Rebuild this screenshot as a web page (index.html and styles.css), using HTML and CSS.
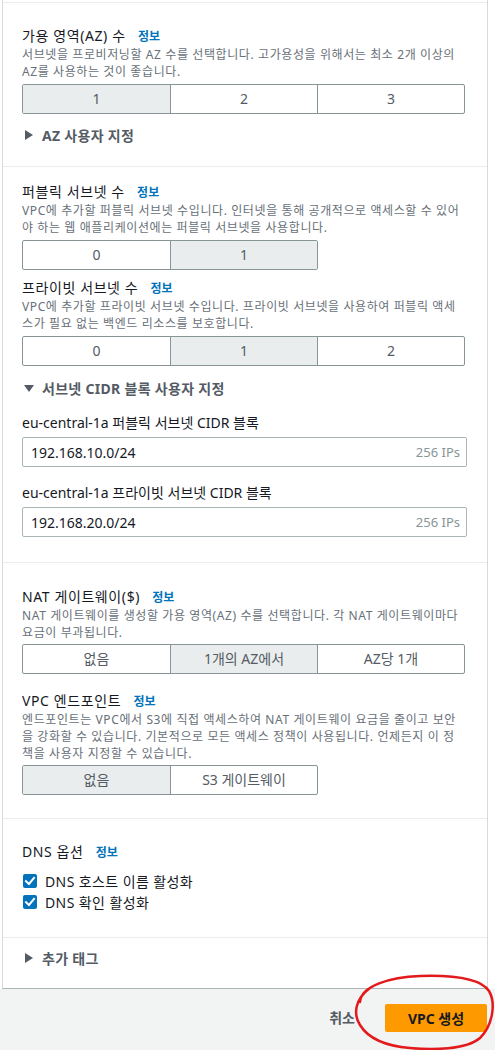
FILE: index.html
```html
<!DOCTYPE html>
<html lang="ko">
<head>
<meta charset="utf-8">
<title>VPC 생성</title>
<link rel="stylesheet" href="styles.css">
</head>
<body>
<div class="card">
  <section class="sec sec-az">
    <div class="label">가용 영역(AZ) 수 <a class="info">정보</a></div>
    <p class="desc">서브넷을 프로비저닝할 AZ 수를 선택합니다. 고가용성을 위해서는 최소 2개 이상의<br>AZ를 사용하는 것이 좋습니다.</p>
    <div class="seg">
      <span class="opt on">1</span><span class="opt">2</span><span class="opt">3</span>
    </div>
    <div class="expander exp-az"><svg class="caret" viewBox="0 0 10 10"><path d="M1 0 L9 5 L1 10 Z"/></svg>AZ 사용자 지정</div>
  </section>

  <section class="sec sec-subnet">
    <div class="label">퍼블릭 서브넷 수 <a class="info">정보</a></div>
    <p class="desc">VPC에 추가할 퍼블릭 서브넷 수입니다. 인터넷을 통해 공개적으로 액세스할 수 있어<br>야 하는 웹 애플리케이션에는 퍼블릭 서브넷을 사용합니다.</p>
    <div class="seg seg-2">
      <span class="opt">0</span><span class="opt on">1</span>
    </div>
    <div class="label label-next">프라이빗 서브넷 수 <a class="info">정보</a></div>
    <p class="desc">VPC에 추가할 프라이빗 서브넷 수입니다. 프라이빗 서브넷을 사용하여 퍼블릭 액세<br>스가 필요 없는 백엔드 리소스를 보호합니다.</p>
    <div class="seg">
      <span class="opt">0</span><span class="opt on">1</span><span class="opt">2</span>
    </div>
    <div class="expander exp-cidr"><svg class="caret" viewBox="0 0 10 10"><path d="M0 2 L10 2 L5 9 Z"/></svg>서브넷 CIDR 블록 사용자 지정</div>

    <div class="field-label fl-1">eu-central-1a 퍼블릭 서브넷 CIDR 블록</div>
    <div class="input"><span class="val">192.168.10.0/24</span><span class="hint">256 IPs</span></div>
    <div class="field-label fl-2">eu-central-1a 프라이빗 서브넷 CIDR 블록</div>
    <div class="input"><span class="val">192.168.20.0/24</span><span class="hint">256 IPs</span></div>
  </section>

  <section class="sec sec-nat">
    <div class="label">NAT 게이트웨이($) <a class="info">정보</a></div>
    <p class="desc">NAT 게이트웨이를 생성할 가용 영역(AZ) 수를 선택합니다. 각 NAT 게이트웨이마다<br>요금이 부과됩니다.</p>
    <div class="seg seg-nat">
      <span class="opt">없음</span><span class="opt on">1개의 AZ에서</span><span class="opt">AZ당 1개</span>
    </div>
    <div class="label label-ep">VPC 엔드포인트 <a class="info">정보</a></div>
    <p class="desc">엔드포인트는 VPC에서 S3에 직접 액세스하여 NAT 게이트웨이 요금을 줄이고 보안<br>을 강화할 수 있습니다. 기본적으로 모든 액세스 정책이 사용됩니다. 언제든지 이 정<br>책을 사용자 지정할 수 있습니다.</p>
    <div class="seg seg-2 seg-ep">
      <span class="opt on">없음</span><span class="opt">S3 게이트웨이</span>
    </div>
  </section>

  <section class="sec sec-dns">
    <div class="label">DNS 옵션 <a class="info">정보</a></div>
    <div class="checks">
      <label class="check"><svg class="box" viewBox="0 0 14 14"><rect width="14" height="14" rx="2"/><path d="M3 7.2 L6 10 L11 4" /></svg>DNS 호스트 이름 활성화</label>
      <label class="check"><svg class="box" viewBox="0 0 14 14"><rect width="14" height="14" rx="2"/><path d="M3 7.2 L6 10 L11 4" /></svg>DNS 확인 활성화</label>
    </div>
  </section>

  <section class="sec sec-tags">
    <div class="expander"><svg class="caret" viewBox="0 0 10 10"><path d="M1 0 L9 5 L1 10 Z"/></svg>추가 태그</div>
  </section>
</div>

<footer class="footer">
  <span class="cancel">취소</span>
  <button class="primary">VPC 생성</button>
</footer>

<svg class="annot" viewBox="350 968 145 82" width="145" height="82">
  <path d="M360 1002 C 361 986, 390 977, 420 976 C 452 975, 480 978, 489 991 C 496 1003, 493 1025, 480 1038 C 466 1050, 432 1050, 410 1048 C 386 1046, 368 1038, 360 1025 C 353 1014, 355 999, 370 988"/>
</svg>
</body>
</html>
```

FILE: styles.css
```css
* { box-sizing: border-box; }

html, body {
  margin: 0;
  padding: 0;
  background: #ffffff;
}

body {
  font-family: "Noto Sans", "Noto Sans CJK KR", sans-serif;
  color: #16191f;
  font-size: 14px;
  position: relative;
  width: 495px;
  height: 1050px;
  overflow: hidden;
}

.card {
  margin-left: 2px;
  width: 486px;
  padding-top: 2px;
  border-left: 1px solid #d5dbdb;
  border-right: 1px solid #d5dbdb;
  border-bottom: 1px solid #aab7b8;
  background: #fff;
}

.sec {
  border-top: 1px solid #eaeded;
  padding: 0 22px 0 19px;
}

.sec-az { padding-top: 23px; padding-bottom: 21px; }
.sec-subnet { padding-top: 15px; padding-bottom: 25px; }
.sec-nat { padding-top: 24px; padding-bottom: 23px; }
.sec-dns { padding-top: 23px; padding-bottom: 25px; }
.sec-tags { padding-top: 10px; padding-bottom: 20px; }

.label {
  font-size: 14px;
  line-height: 20px;
  height: 20px;
  letter-spacing: 0.6px;
  color: #16191f;
}

.label-next { margin-top: 8px; }
.label-ep { margin-top: 17px; }

.info {
  color: #0073bb;
  font-size: 12px;
  line-height: 14px;
  font-weight: 700;
  letter-spacing: 0;
  margin-left: 8px;
}

.desc {
  margin: 0;
  font-size: 12px;
  line-height: 17px;
  letter-spacing: 0.6px;
  white-space: nowrap;
  color: #687078;
}

.seg {
  margin-top: 4px;
  width: 443px;
  display: grid;
  grid-template-columns: repeat(3, 1fr);
  border: 1px solid #879596;
  border-radius: 2px;
}

.seg-2 {
  width: 296px;
  grid-template-columns: repeat(2, 1fr);
}

.seg-nat { margin-top: 3px; }
.seg-ep { margin-top: 3px; }

.opt {
  height: 28px;
  line-height: 28px;
  text-align: center;
  font-size: 14px;
  color: #545b64;
}

.opt + .opt { border-left: 1px solid #879596; }

.opt.on { background: #eaeded; }

.expander {
  display: flex;
  align-items: center;
  height: 20px;
  font-size: 14px;
  font-weight: 700;
  letter-spacing: 0.3px;
  color: #545b64;
}

.exp-az { margin-top: 11px; }
.exp-cidr { margin-top: 12px; }

.caret {
  width: 10px;
  height: 10px;
  margin-left: 2px;
  margin-right: 8px;
  fill: #545b64;
}

.field-label {
  font-size: 14px;
  line-height: 20px;
  height: 20px;
  color: #16191f;
}

.fl-1 { margin-top: 15px; }
.fl-2 { margin-top: 16px; }

.input {
  margin-top: 4px;
  width: 445px;
  height: 30px;
  border: 1px solid #aab7b8;
  border-radius: 2px;
  display: flex;
  align-items: center;
  justify-content: space-between;
  padding: 0 6px 0 8px;
}

.val { font-size: 14px; color: #16191f; }
.hint { font-size: 13px; color: #879596; }

.checks {
  margin-top: 8px;
  display: flex;
  flex-direction: column;
}

.check {
  display: flex;
  align-items: center;
  height: 21px;
  font-size: 14px;
  letter-spacing: 0.4px;
  color: #16191f;
}

.box {
  width: 14px;
  height: 14px;
  margin-left: 1px;
  margin-right: 8px;
}

.box rect { fill: #0073bb; }
.box path {
  fill: none;
  stroke: #fff;
  stroke-width: 2;
  stroke-linecap: square;
}

.footer {
  background: #f2f3f3;
  height: 62px;
  display: flex;
  justify-content: flex-end;
  align-items: flex-start;
  gap: 30px;
  padding: 15px 8px 0 0;
}

.cancel {
  font-size: 14px;
  font-weight: 700;
  color: #545b64;
  line-height: 28px;
}

.primary {
  width: 102px;
  height: 28px;
  border: none;
  border-radius: 2px;
  background: #ff9900;
  color: #16191f;
  font-family: inherit;
  font-size: 14px;
  font-weight: 700;
  padding: 0;
}

.annot {
  position: absolute;
  left: 350px;
  top: 968px;
  fill: none;
  stroke: #e3191c;
  stroke-width: 2.5;
  stroke-linecap: round;
}
```
